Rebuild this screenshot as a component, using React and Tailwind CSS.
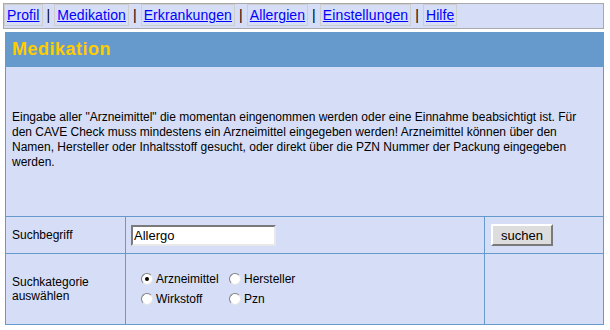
import React, { useState } from 'react';

const navItems = ['Profil', 'Medikation', 'Erkrankungen', 'Allergien', 'Einstellungen', 'Hilfe'];

const Radio = ({ checked, label, onClick }) => (
  <label className="flex items-center cursor-pointer" onClick={onClick}>
    <span className="relative w-[12px] h-[12px] rounded-full bg-white border border-t-[#808080] border-l-[#808080] border-b-[#e4e4e4] border-r-[#e4e4e4] flex items-center justify-center">
      {checked && <span className="w-[4px] h-[4px] rounded-full bg-black" />}
    </span>
    <span className="ml-[3px]">{label}</span>
  </label>
);

const App = () => {
  const [query, setQuery] = useState('Allergo');
  const [category, setCategory] = useState('Arzneimittel');

  return (
    <div className="w-[610px] h-[330px] bg-white font-['Liberation_Sans',Arial,sans-serif] text-black overflow-hidden">
      {/* Navigation */}
      <div className="ml-[3px] mt-[3px] w-[601px] h-[26px] bg-[#d6def7] border border-[#a9a9a9] flex items-start text-[14px] leading-[16px] tracking-[0.1px]">
        {navItems.map((item, i) => (
          <React.Fragment key={item}>
            {i > 0 && <span className="whitespace-pre pt-[3px]"> | </span>}
            <span className="border border-[#cdcdcd] px-[2px] py-[2px]">
              <a href="#" className="text-[#0000ff] underline">{item}</a>
            </span>
          </React.Fragment>
        ))}
      </div>

      {/* Panel */}
      <div className="ml-[5px] mt-[3px] w-[599px]">
        <div className="h-[35px] bg-[#6699cc] flex items-center pl-[7px]">
          <h1 className="text-[18px] font-bold tracking-[0.5px] text-[#ffcc00]">Medikation</h1>
        </div>

        <div className="bg-[#d6def7] border border-t-0 border-[#6699cc] text-[12px]">
          <div className="h-[150px] flex items-center px-[6px] pb-[4px] border-b border-[#6699cc] leading-[15px]">
            <p>
              Eingabe aller "Arzneimittel" die momentan eingenommen werden oder eine Einnahme beabsichtigt ist. Für
              den CAVE Check muss mindestens ein Arzneimittel eingegeben werden! Arzneimittel können über den
              Namen, Hersteller oder Inhaltsstoff gesucht, oder direkt über die PZN Nummer der Packung eingegeben
              werden.
            </p>
          </div>

          <div className="flex h-[37px] border-b border-[#6699cc]">
            <div className="w-[120px] border-r border-[#6699cc] flex items-center pl-[6px]">Suchbegriff</div>
            <div className="w-[359px] border-r border-[#6699cc] flex items-center pl-[5px]">
              <input
                type="text"
                value={query}
                onChange={(e) => setQuery(e.target.value)}
                className="w-[145px] h-[21px] bg-white border-2 border-t-[#7a7a7a] border-l-[#7a7a7a] border-b-[#e8e8e8] border-r-[#e8e8e8] px-[1px] text-[13px] outline-none"
              />
            </div>
            <div className="flex-1 flex items-center pl-[6px]">
              <button className="w-[62px] h-[22px] bg-[#dddddd] border-2 border-t-white border-l-white border-b-[#7a7a7a] border-r-[#7a7a7a] text-[13px]">
                suchen
              </button>
            </div>
          </div>

          <div className="flex h-[70px]">
            <div className="w-[120px] border-r border-[#6699cc] flex items-center pl-[6px] leading-[14px]">
              <span>Suchkategorie<br />auswählen</span>
            </div>
            <div className="w-[359px] border-r border-[#6699cc] flex items-center pl-[15px] leading-[16px]">
              <div className="grid grid-cols-[88px_auto] gap-y-[4px]">
                {['Arzneimittel', 'Hersteller', 'Wirkstoff', 'Pzn'].map((c) => (
                  <Radio key={c} label={c} checked={category === c} onClick={() => setCategory(c)} />
                ))}
              </div>
            </div>
            <div className="flex-1" />
          </div>
        </div>
      </div>
    </div>
  );
};

export default App;
